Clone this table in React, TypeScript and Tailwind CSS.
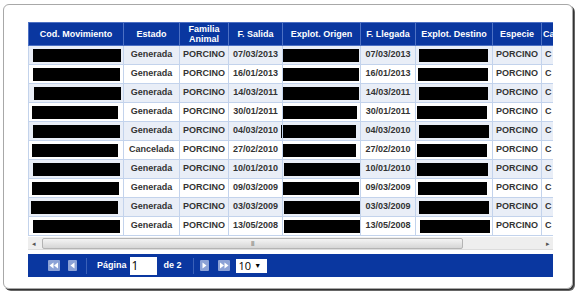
import React from "react";

type Row = {
  estado: string;
  salida: string;
  llegada: string;
  cod: [number, number];
  ori: [number, number];
  des: [number, number];
};

const rows: Row[] = [
  { estado: "Generada", salida: "07/03/2013", llegada: "07/03/2013", cod: [4, 88], ori: [0, 76], des: [3, 69] },
  { estado: "Generada", salida: "16/01/2013", llegada: "16/01/2013", cod: [4, 87], ori: [0, 76], des: [2, 70] },
  { estado: "Generada", salida: "14/03/2011", llegada: "14/03/2011", cod: [5, 87], ori: [0, 76], des: [3, 69] },
  { estado: "Generada", salida: "30/01/2011", llegada: "30/01/2011", cod: [3, 86], ori: [0, 74], des: [1, 70] },
  { estado: "Generada", salida: "04/03/2010", llegada: "04/03/2010", cod: [4, 87], ori: [-2, 75], des: [3, 70] },
  { estado: "Cancelada", salida: "27/02/2010", llegada: "27/02/2010", cod: [3, 86], ori: [-1, 74], des: [1, 70] },
  { estado: "Generada", salida: "10/01/2010", llegada: "10/01/2010", cod: [4, 87], ori: [1, 77], des: [1, 71] },
  { estado: "Generada", salida: "09/03/2009", llegada: "09/03/2009", cod: [3, 87], ori: [0, 76], des: [2, 69] },
  { estado: "Generada", salida: "03/03/2009", llegada: "03/03/2009", cod: [2, 87], ori: [1, 77], des: [3, 70] },
  { estado: "Generada", salida: "13/05/2008", llegada: "13/05/2008", cod: [4, 87], ori: [1, 77], des: [4, 70] },
];

const widths = [95, 56, 49, 54, 78, 55, 77, 49, 12];

function Redact({ v }: { v: [number, number] }) {
  return (
    <div className="h-[13px] bg-black" style={{ marginLeft: v[0], width: v[1] }} />
  );
}

function NavIcon({ dir, double }: { dir: "l" | "r"; double?: boolean }) {
  const w = double ? 12 : 9;
  return (
    <svg width={w} height="11" viewBox={`0 0 ${w} 11`}>
      <rect x="0" y="0" width={w} height="11" rx="1" fill="#8ca2d6" />
      {dir === "l" ? (
        double ? (
          <>
            <polygon points="1.5,5.5 5.5,2.5 5.5,8.5" fill="#fff" />
            <polygon points="6,5.5 10,2.5 10,8.5" fill="#fff" />
          </>
        ) : (
          <polygon points="2.5,5.5 6.5,2.5 6.5,8.5" fill="#fff" />
        )
      ) : double ? (
        <>
          <polygon points="2,2.5 6,5.5 2,8.5" fill="#fff" />
          <polygon points="6.5,2.5 10.5,5.5 6.5,8.5" fill="#fff" />
        </>
      ) : (
        <polygon points="2.5,2.5 6.5,5.5 2.5,8.5" fill="#fff" />
      )}
    </svg>
  );
}

export default function App() {
  const headers = [
    "Cod. Movimiento",
    "Estado",
    "Familia Animal",
    "F. Salida",
    "Explot. Origen",
    "F. Llegada",
    "Explot. Destino",
    "Especie",
    "Ca",
  ];
  return (
    <div className="w-[578px] h-[293px] bg-white pl-[3px] pt-[4px] font-['Liberation_Sans',Arial,sans-serif]">
      <div className="w-[570px] h-[285px] rounded-[6px] border border-[#a8a8a8] shadow-[1px_1px_0_#333,2px_2px_0_#666] pl-[24px] pt-[17px]">
        <div className="w-[525px] overflow-hidden">
          <table className="border-collapse table-fixed w-[525px]">
            <colgroup>
              {widths.map((w, i) => (
                <col key={i} style={{ width: w }} />
              ))}
            </colgroup>
            <thead>
              <tr className="h-[23px] bg-[#0a37a0]">
                {headers.map((h, i) => (
                  <th
                    key={i}
                    className={`border border-[#4d71c4] text-white font-bold text-[9px] leading-[10px] whitespace-nowrap ${
                      i === 8 ? "text-left pl-[1px] pr-0 border-r-0" : "text-center px-[2px]"
                    }`}
                  >
                    {i === 2 ? (
                      <>
                        Familia
                        <br />
                        Animal
                      </>
                    ) : (
                      h
                    )}
                  </th>
                ))}
              </tr>
            </thead>
            <tbody>
              {rows.map((r, i) => (
                <tr
                  key={i}
                  className={`h-[19px] text-[9px] font-bold text-[#333] ${
                    i % 2 === 0 ? "bg-[#e9eef7]" : "bg-white"
                  }`}
                >
                  <td className="border border-[#c3d3ec] p-0">
                    <Redact v={r.cod} />
                  </td>
                  <td className="border border-[#c3d3ec] text-center">{r.estado}</td>
                  <td className="border border-[#c3d3ec] text-center">PORCINO</td>
                  <td className="border border-[#c3d3ec] text-center">{r.salida}</td>
                  <td className="border border-[#c3d3ec] p-0">
                    <Redact v={r.ori} />
                  </td>
                  <td className="border border-[#c3d3ec] text-center">{r.llegada}</td>
                  <td className="border border-[#c3d3ec] p-0">
                    <Redact v={r.des} />
                  </td>
                  <td className="border border-[#c3d3ec] text-center">PORCINO</td>
                  <td className="border border-[#c3d3ec] border-r-0 text-left pl-[3px] pr-0">C</td>
                </tr>
              ))}
            </tbody>
          </table>
        </div>
        {/* scrollbar */}
        <div className="w-[525px] h-[13px] bg-[#eeeeee] border-b border-[#dcdcdc] flex items-center mt-[1px]">
          <span className="ml-[4px] w-[6px] text-[7px] leading-none text-[#555]">◂</span>
          <div className="ml-[4px] w-[421px] h-[11px] rounded-[2px] border border-[#b4b4b4] bg-gradient-to-b from-[#f4f4f4] to-[#d6d6d6] flex items-center justify-center">
            <span className="text-[6px] leading-none text-[#666] tracking-[-0.5px]">|||</span>
          </div>
          <span className="ml-auto mr-[3px] text-[7px] leading-none text-[#555]">▸</span>
        </div>
        {/* pager */}
        <div className="w-[525px] h-[23px] bg-[#0a37a0] mt-[4px] flex items-center text-white">
          <div className="ml-[20px] flex items-center">
            <NavIcon dir="l" double />
          </div>
          <div className="ml-[8px] flex items-center">
            <NavIcon dir="l" />
          </div>
          <div className="ml-[9px] w-px h-[16px] bg-[#3a60b8]" />
          <span className="ml-[10px] text-[9px] font-bold">Página</span>
          <div className="ml-[3px] w-[27px] h-[18px] bg-white text-black text-[12px] leading-[18px] pl-[2px] font-['Open_Sans',sans-serif]">
            1
          </div>
          <span className="ml-[7px] text-[9px] font-bold">de 2</span>
          <div className="ml-[11px] w-px h-[16px] bg-[#3a60b8]" />
          <div className="ml-[6px] flex items-center">
            <NavIcon dir="r" />
          </div>
          <div className="ml-[9px] flex items-center">
            <NavIcon dir="r" double />
          </div>
          <div className="ml-[6px] w-[31px] h-[14px] bg-white text-black text-[11px] leading-[14px] pl-[3px] flex items-center font-['Open_Sans',sans-serif]">
            10
            <span className="ml-[3px] text-[7px]">▼</span>
          </div>
        </div>
      </div>
    </div>
  );
}
